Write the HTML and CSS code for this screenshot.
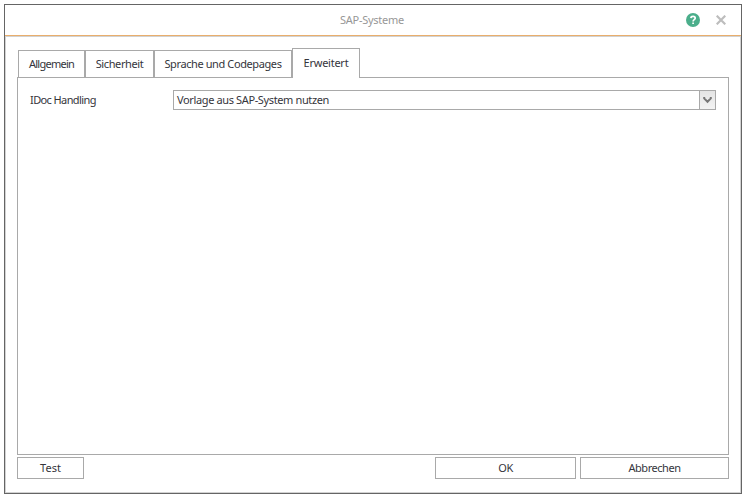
FILE: index.html
```html
<!DOCTYPE html>
<html lang="de">
<head>
<meta charset="utf-8">
<title>SAP-Systeme</title>
<link rel="stylesheet" href="styles.css">
</head>
<body>
<section class="window">
  <header class="titlebar">
    <h1 class="title">SAP-Systeme</h1>
    <div class="tools">
      <svg class="help" width="14" height="14" viewBox="0 0 14 14"><circle cx="7" cy="7" r="7" fill="#4bae8b"/><path d="M4.9 5.1C5 2.9 9.2 2.9 9.2 5.2 9.2 6.6 7.1 6.7 7.1 8.4M7.1 9.4v1.6" fill="none" stroke="#fff" stroke-width="1.7"/></svg>
      <svg class="close" width="10" height="10" viewBox="0 0 10 10"><path d="M.7.7l8.6 8.6M9.3.7L.7 9.3" fill="none" stroke="#bdbdbd" stroke-width="2.2"/></svg>
    </div>
  </header>
  <main class="content">
    <nav class="tabs">
      <div class="tab tab-general"><span>Allgemein</span></div>
      <div class="tab tab-security"><span>Sicherheit</span></div>
      <div class="tab tab-language"><span>Sprache und Codepages</span></div>
      <div class="tab tab-advanced active"><span>Erweitert</span></div>
    </nav>
    <div class="panel">
      <label class="label">IDoc Handling</label>
      <div class="select">
        <span class="value">Vorlage aus SAP-System nutzen</span>
        <span class="arrow"><svg width="9" height="8" viewBox="0 0 9 8"><path d="M1.2 1v1.4l3.3 3.4 3.3-3.4V1" fill="none" stroke="#777" stroke-width="2"/></svg></span>
      </div>
    </div>
    <footer class="actions">
      <button class="button test">Test</button>
      <button class="button ok">OK</button>
      <button class="button cancel">Abbrechen</button>
    </footer>
  </main>
</section>
</body>
</html>
```
FILE: styles.css
```css
* { box-sizing: border-box; }
body {
  margin: 0;
  padding: 4px;
  background: #fff;
  color: #35353b;
  font: 11px/14px "Noto Sans", "DejaVu Sans", sans-serif;
  letter-spacing: -0.4px;
  white-space: nowrap;
}
.window {
  width: 738px;
  height: 490px;
  border: 1px solid #656565;
  background: #fff;
}
.titlebar {
  display: grid;
  grid-template-columns: 1fr auto 1fr;
  align-items: center;
  height: 31px;
  padding: 0 15px 0 13px;
  border-bottom: 1px solid #e9ae6c;
}
.title {
  grid-column: 2;
  margin: 0;
  color: #979797;
  font-size: 11px;
  font-weight: normal;
  letter-spacing: -0.27px;
}
.tools {
  display: flex;
  justify-content: flex-end;
  align-items: center;
  gap: 16px;
}
.content {
  height: 457px;
  padding: 11px 11px 0;
  border: 1px solid #d2d2d2;
}
.tabs {
  display: flex;
  align-items: flex-end;
  height: 30px;
  padding-left: 1px;
}
.tab {
  height: 27px;
  margin-bottom: 1px;
  padding-top: 6px;
  border: 1px solid #a9a9a9;
  border-bottom: 0;
  text-align: center;
}
.tab-general { width: 67px; letter-spacing: -0.75px; }
.tab-security { width: 69px; }
.tab-language { width: 138px; }
.tab-advanced { width: 68px; letter-spacing: -0.25px; }
.tab.active {
  position: relative;
  height: 30px;
  margin: 0;
  padding-top: 7px;
  background: #fff;
}
.panel {
  display: flex;
  width: 712px;
  height: 378px;
  margin-top: -1px;
  padding: 12px;
  border: 1px solid #a9a9a9;
}
.label { width: 143px; padding-top: 3px; letter-spacing: -0.6px; }
.select {
  display: flex;
  width: 543px;
  height: 20px;
  border: 1px solid #a9a9a9;
}
.value { flex: 1; padding: 2px 0 0 3px; letter-spacing: -0.37px; }
.arrow {
  display: grid;
  place-items: center;
  width: 16px;
  border-left: 1px solid #a9a9a9;
  background: linear-gradient(#e4e4e4, #f3f3f3);
}
.actions { display: flex; padding-top: 2px; }
.button {
  height: 22px;
  padding: 0;
  border: 1px solid #a9a9a9;
  background: #fff;
  color: inherit;
  font: inherit;
  letter-spacing: -0.45px;
}
.test { width: 67px; letter-spacing: 0; }
.ok { width: 141px; margin-left: auto; }
.cancel { width: 149px; margin: 0 0 0 4px; }
```
